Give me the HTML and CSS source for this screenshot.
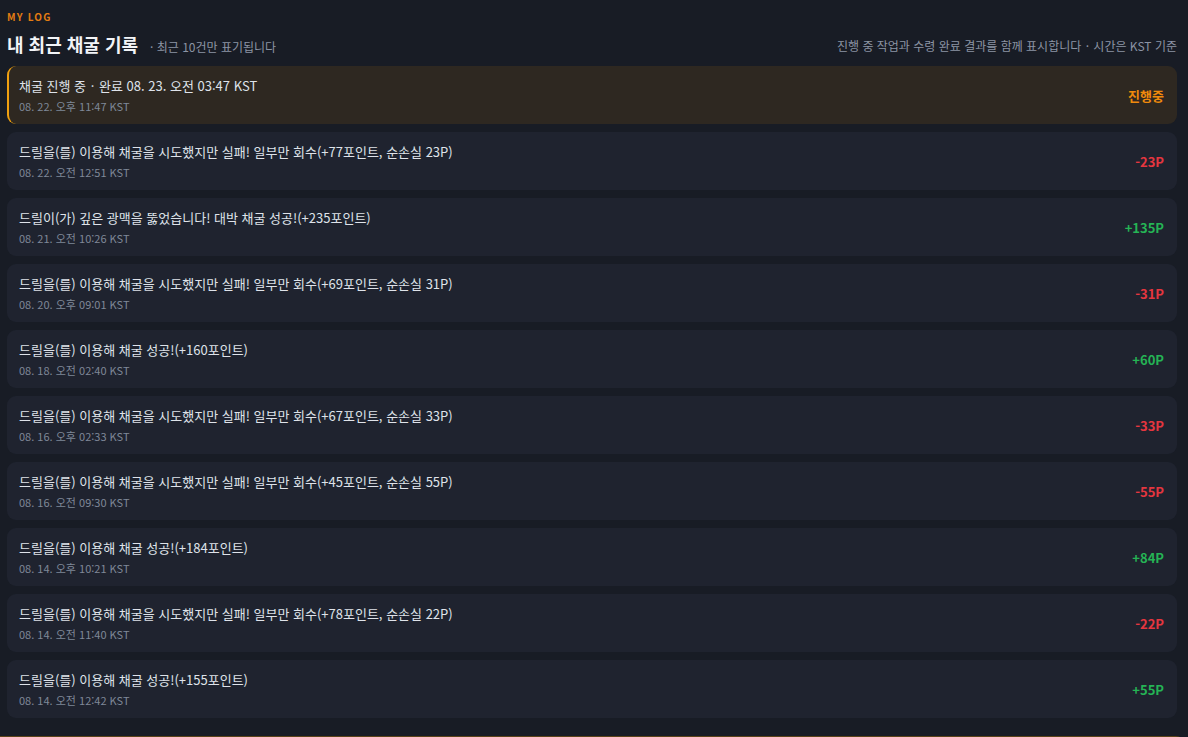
FILE: index.html
```
<!doctype html>
<html lang="ko">
<head>
    <meta charset="UTF-8">
    <meta name="viewport" content="width=device-width, initial-scale=1.0">
    <title>MY LOG</title>
    <link rel="stylesheet" href="styles.css">
</head>
<body>

<section class="log_panel">
    <div class="log_eyebrow">MY LOG</div>
    <div class="log_head">
        <div class="log_title">
            <h2>내 최근 채굴 기록</h2>
            <span class="log_sub">· 최근 10건만 표기됩니다</span>
        </div>
        <div class="log_note">진행 중 작업과 수령 완료 결과를 함께 표시합니다 <span class="dot">·</span> 시간은 KST 기준</div>
    </div>

    <div class="log_list">
        <!-- running -->
        <div class="log_item active">
            <div class="log_text">
                <div class="log_msg">채굴 진행 중 <span class="dot">·</span> 완료 08. 23. 오전 03:47 KST</div>
                <div class="log_date">08. 22. 오후 11:47 KST</div>
            </div>
            <div class="log_val run">진행중</div>
        </div>
        <!-- done -->
        <div class="log_item">
            <div class="log_text">
                <div class="log_msg">드릴을(를) 이용해 채굴을 시도했지만 실패! 일부만 회수(+77포인트, 순손실 23P)</div>
                <div class="log_date">08. 22. 오전 12:51 KST</div>
            </div>
            <div class="log_val minus">-23P</div>
        </div>
        <div class="log_item">
            <div class="log_text">
                <div class="log_msg">드릴이(가) 깊은 광맥을 뚫었습니다! 대박 채굴 성공!(+235포인트)</div>
                <div class="log_date">08. 21. 오전 10:26 KST</div>
            </div>
            <div class="log_val plus">+135P</div>
        </div>
        <div class="log_item">
            <div class="log_text">
                <div class="log_msg">드릴을(를) 이용해 채굴을 시도했지만 실패! 일부만 회수(+69포인트, 순손실 31P)</div>
                <div class="log_date">08. 20. 오후 09:01 KST</div>
            </div>
            <div class="log_val minus">-31P</div>
        </div>
        <div class="log_item">
            <div class="log_text">
                <div class="log_msg">드릴을(를) 이용해 채굴 성공!(+160포인트)</div>
                <div class="log_date">08. 18. 오전 02:40 KST</div>
            </div>
            <div class="log_val plus">+60P</div>
        </div>
        <div class="log_item">
            <div class="log_text">
                <div class="log_msg">드릴을(를) 이용해 채굴을 시도했지만 실패! 일부만 회수(+67포인트, 순손실 33P)</div>
                <div class="log_date">08. 16. 오후 02:33 KST</div>
            </div>
            <div class="log_val minus">-33P</div>
        </div>
        <div class="log_item">
            <div class="log_text">
                <div class="log_msg">드릴을(를) 이용해 채굴을 시도했지만 실패! 일부만 회수(+45포인트, 순손실 55P)</div>
                <div class="log_date">08. 16. 오전 09:30 KST</div>
            </div>
            <div class="log_val minus">-55P</div>
        </div>
        <div class="log_item">
            <div class="log_text">
                <div class="log_msg">드릴을(를) 이용해 채굴 성공!(+184포인트)</div>
                <div class="log_date">08. 14. 오후 10:21 KST</div>
            </div>
            <div class="log_val plus">+84P</div>
        </div>
        <div class="log_item">
            <div class="log_text">
                <div class="log_msg">드릴을(를) 이용해 채굴을 시도했지만 실패! 일부만 회수(+78포인트, 순손실 22P)</div>
                <div class="log_date">08. 14. 오전 11:40 KST</div>
            </div>
            <div class="log_val minus">-22P</div>
        </div>
        <div class="log_item">
            <div class="log_text">
                <div class="log_msg">드릴을(를) 이용해 채굴 성공!(+155포인트)</div>
                <div class="log_date">08. 14. 오전 12:42 KST</div>
            </div>
            <div class="log_val plus">+55P</div>
        </div>
    </div>
</section>

<div class="next_panel"></div>

</body>
</html>
```

FILE: styles.css
```
body {
    margin: 0;
    background-color: #181c25;
    font-family: "Noto Sans CJK KR", "Noto Sans", sans-serif;
    color: #dfe3ea;
    overflow: hidden;
}

.log_panel {
    padding: 10px 11px 18px 7px;
}

.log_eyebrow {
    font-size: 10px;
    line-height: 14px;
    font-weight: 700;
    letter-spacing: 1.2px;
    color: #e47c12;
}

.log_head {
    display: flex;
    justify-content: space-between;
    align-items: flex-end;
    margin-top: 8px;
    margin-bottom: 10px;
}
.log_title {
    display: flex;
    align-items: baseline;
    gap: 12px;
}
.log_title h2 {
    margin: 0;
    font-size: 18px;
    line-height: 24px;
    font-weight: 700;
    color: #f2f4f7;
}
.log_sub {
    font-size: 12px;
    color: #8c94a4;
}
.log_note {
    font-size: 12px;
    line-height: 18px;
    color: #8c94a4;
    padding-bottom: 1px;
}

.dot {
    margin: 0 1px;
}

.log_list {
    display: flex;
    flex-direction: column;
    gap: 8px;
}

.log_item {
    display: flex;
    justify-content: space-between;
    align-items: center;
    padding: 11px 13px 10px 12px;
    background-color: #1f232f;
    border-radius: 9px;
}
.log_item.active {
    background-color: #2e2821;
    border-left: 2px solid #f0a010;
    padding-left: 10px;
}

.log_msg {
    font-size: 13px;
    line-height: 18px;
    color: #dfe3ea;
}
.log_date {
    margin-top: 3px;
    font-size: 11px;
    line-height: 16px;
    color: #7f8898;
}

.log_val {
    font-size: 13px;
    font-weight: 700;
}
.log_val.run {
    color: #f08a0c;
}
.log_val.minus {
    color: #e5363f;
}
.log_val.plus {
    color: #25b455;
}

/* top edge of the panel below */
.next_panel {
    height: 20px;
    margin-right: 4px;
    border-top: 1px solid #5b4419;
    border-right: 1px solid #5b4419;
    border-top-right-radius: 8px;
}
```
